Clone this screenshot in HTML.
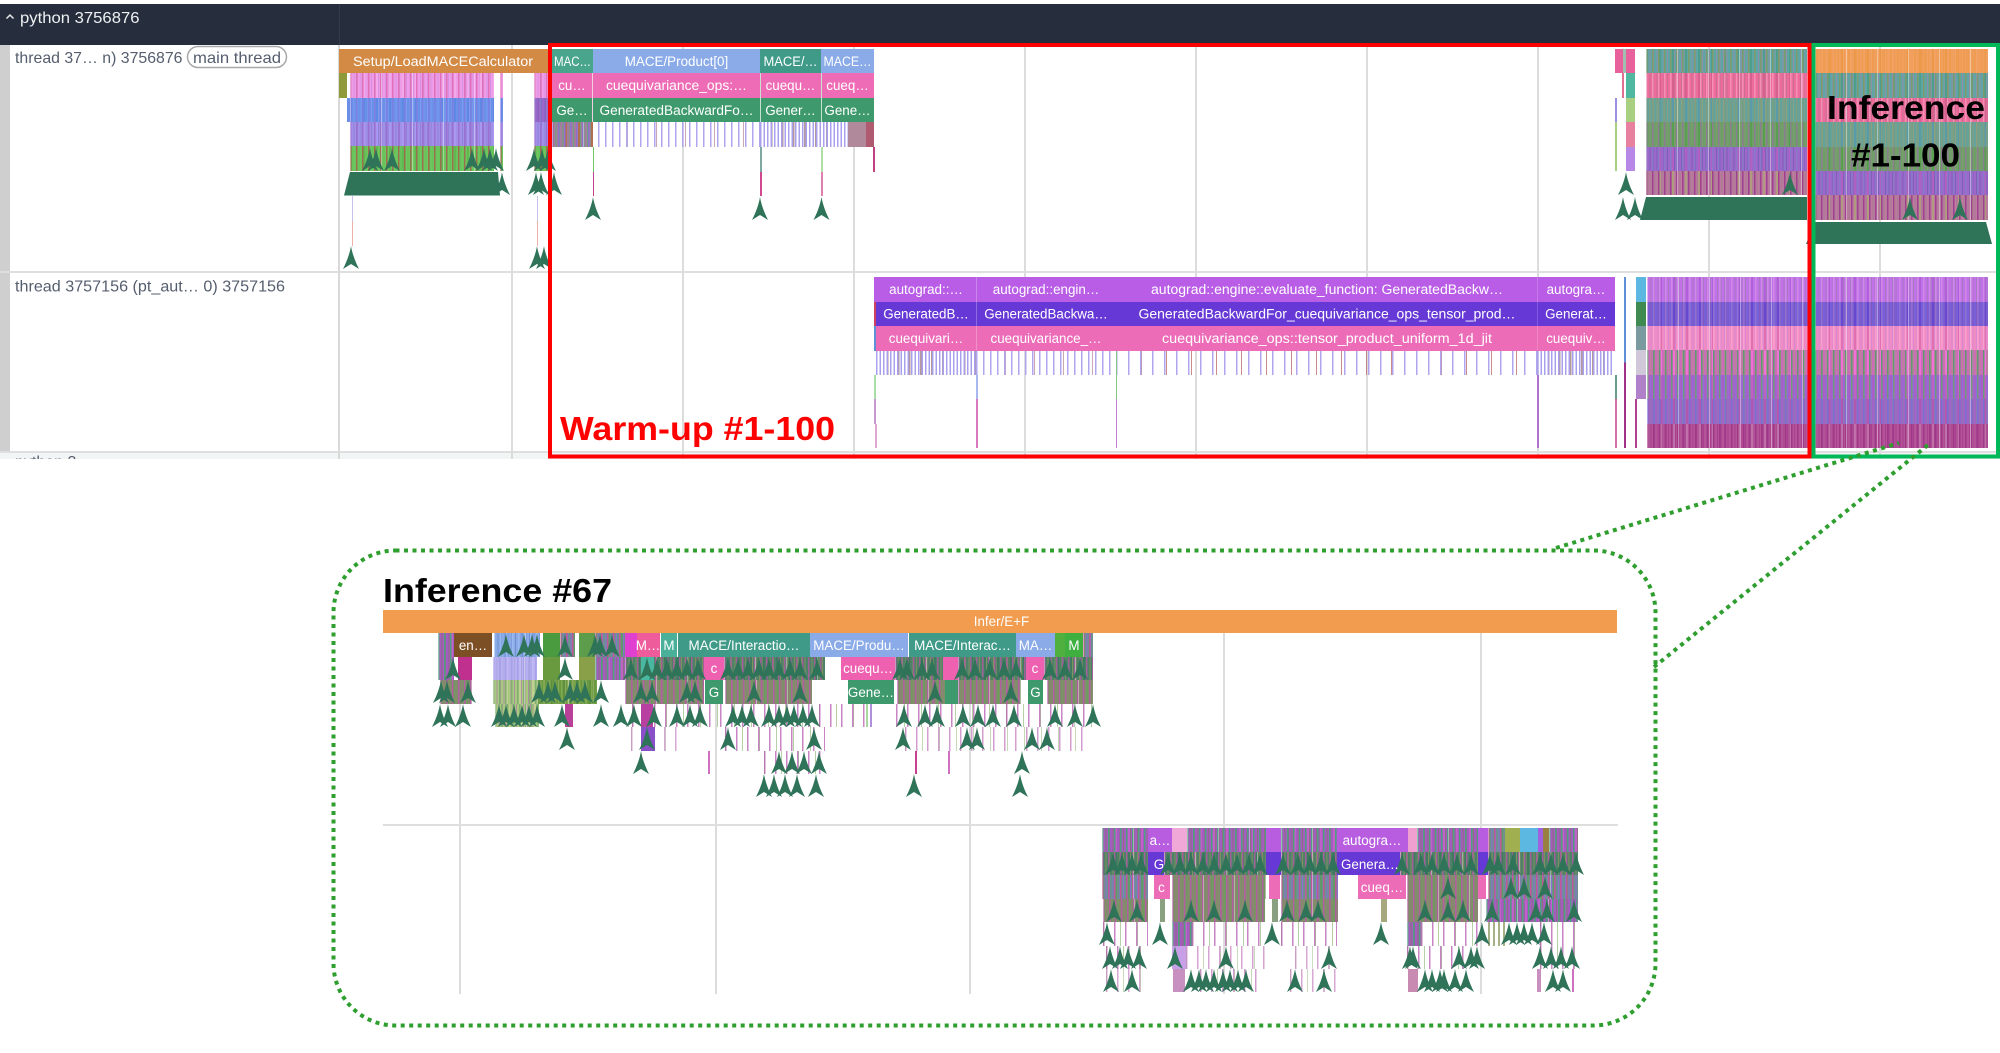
<!DOCTYPE html>
<html><head><meta charset="utf-8"><title>Trace</title>
<style>
html,body{margin:0;padding:0;background:#fff;width:2000px;height:1053px;overflow:hidden}
i{position:absolute;display:block}
.c{position:absolute}
.c b{display:block;height:24.4px}
.x,.c b{background:repeating-linear-gradient(90deg,rgba(255,255,255,.38) 0 1px,transparent 1px 31px),repeating-linear-gradient(90deg,var(--a) 0 1.5px,transparent 1.5px 6px),repeating-linear-gradient(90deg,var(--b) 0 2px,transparent 2px 13px),repeating-linear-gradient(90deg,var(--c) 0 1px,transparent 1px 3.5px),var(--d)}
.t1{--d:#5fa5a5;--a:#7f9a6a;--b:#4e9e8e;--c:#8f8fa8}
.p1{--d:#ee6c9c;--a:#f58fb5;--b:#d8608f;--c:#c87090}
.t2{--d:#64a29a;--a:#7d9e80;--b:#5b9aa8;--c:#8aa080}
.g1{--d:#6f9f68;--a:#8a7f90;--b:#58a050;--c:#7f9a70}
.u1{--d:#9d68cc;--a:#8a78c8;--b:#b060c0;--c:#7f60b8}
.b1{--d:#b07a98;--a:#a04090;--b:#b09a80;--c:#c07aa0}
.or{--d:#ef9c50;--a:#f0a060;--b:#eb9848;--c:#f2a468}
.a1{--d:#c272e8;--a:#d088e8;--b:#b060d8;--c:#a878c0}
.a2{--d:#7860d8;--a:#8f70d0;--b:#6848d0;--c:#8058c0}
.a3{--d:#f08cc4;--a:#f8a0d0;--b:#e070b0;--c:#d888d0}
.a4{--d:#cc6cb8;--a:#5f9a70;--b:#f070d8;--c:#b08a90}
.a5{--d:#a860c8;--a:#6f9a80;--b:#c060c0;--c:#8a70d8}
.a6{--d:#a264c4;--a:#7a70d0;--b:#b058b0;--c:#8a78b8}
.a7{--d:#b45498;--a:#a03888;--b:#c070a8;--c:#a84090}
.pk{--d:#ee9be8;--a:#e070b8;--b:#f4a8ec;--c:#d890e0}
.bl{--d:#6a90e8;--a:#7a80e0;--b:#5f88e4;--c:#7f9af0}
.pu{--d:#a290e8;--a:#9a70d0;--b:#a898f0;--c:#9080d8}
.gr{--d:#68c45a;--a:#9a7050;--b:#5fb850;--c:#70c860}
.wm{--d:#a27f9c;--a:#8f70d0;--b:#b07050;--c:#6fa080}
.k1{--d:#a45cc0;--a:#4fa080;--b:#c060c8;--c:#8a7080}
.k2{--d:#4f8068;--a:#a06098;--b:#3f7a60;--c:#7f8f60}
.k3{--d:#7f9068;--a:#b060a0;--b:#6f9a60;--c:#8f8078}
.k4{--d:#b8b0f0;--a:#a8a0e8;--b:#c0b8f4;--c:#a8a8e0}
.k5{--d:#a8c880;--a:#80b070;--b:#c0d090;--c:#b090a0}
.k6{--d:#6a9a40;--a:#7fa850;--b:#5f9040;--c:#8aa860}
.k7{--d:#8aabe8;--a:#98b8f0;--b:#80a0e0;--c:#6f90d0}
.k8{--d:#6f9090;--a:#c05898;--b:#5f9a68;--c:#8a70d0}
.sp{background:repeating-linear-gradient(90deg,rgba(176,80,170,.7) 0 1.5px,transparent 1.5px 11px),repeating-linear-gradient(90deg,rgba(120,170,90,.55) 0 1px,transparent 1px 17px)}
.sl{background:repeating-linear-gradient(90deg,#b0a6f0 0 1.5px,transparent 1.5px 7px),repeating-linear-gradient(90deg,rgba(170,110,130,.6) 0 1px,transparent 1px 29px)}
.dl{background:repeating-linear-gradient(90deg,#a8a0ee 0 1.5px,transparent 1.5px 3.5px),repeating-linear-gradient(90deg,rgba(150,110,110,.7) 0 1.5px,transparent 1.5px 11px)}
svg{position:absolute;left:0;top:0}
</style></head><body>

<i style="left:0;top:4px;width:2000px;height:40.5px;background:#262e3d"></i>
<i style="left:339px;top:4px;width:1px;height:40.5px;background:#333b4a"></i>
<i style="left:0;top:45px;width:10px;height:407px;background:#cfcfcf"></i>
<i style="left:0;top:452px;width:2000px;height:7px;background:#f2f5f6;overflow:hidden;font:16px 'Liberation Sans',sans-serif;color:#555e6e"><span style="position:absolute;left:15px;top:2px;line-height:18px">python 3</span></i>
<i style="left:0;top:271px;width:2000px;height:2px;background:#dfdfdf"></i>
<i style="left:0;top:451px;width:2000px;height:2px;background:#dfdfdf"></i>
<i style="left:338px;top:45px;width:2px;height:414px;background:#d9d9d9"></i>
<i style="left:511px;top:45px;width:1.5px;height:414px;background:#dcdcdc"></i>
<i style="left:682px;top:45px;width:1.5px;height:414px;background:#dcdcdc"></i>
<i style="left:853px;top:45px;width:1.5px;height:414px;background:#dcdcdc"></i>
<i style="left:1024px;top:45px;width:1.5px;height:414px;background:#dcdcdc"></i>
<i style="left:1195px;top:45px;width:1.5px;height:414px;background:#dcdcdc"></i>
<i style="left:1366px;top:45px;width:1.5px;height:414px;background:#dcdcdc"></i>
<i style="left:1537px;top:45px;width:1.5px;height:414px;background:#dcdcdc"></i>
<i style="left:1708px;top:45px;width:1.5px;height:414px;background:#dcdcdc"></i>
<i style="left:1879px;top:45px;width:1.5px;height:414px;background:#dcdcdc"></i>

<!-- Setup region -->
<i style="left:339px;top:49px;width:213px;height:24.4px;background:#d28a45"></i>
<i style="left:339px;top:73.3px;width:8px;height:24.4px;background:#8f9a3a"></i>
<i style="left:347px;top:98px;width:3px;height:24.4px;background:#6a90e8"></i>
<div class="c" style="left:350px;top:73.3px;width:144px"><b class="pk"></b><b class="bl"></b><b class="pu"></b><b class="gr"></b></div>
<div class="c" style="left:500px;top:73.3px;width:3px"><b class="pk"></b><b class="bl"></b><b class="pu"></b><b class="gr"></b></div>
<div class="c" style="left:534px;top:73.3px;width:18px"><b class="pk"></b><b class="u1"></b><b class="pu"></b><b class="gr"></b></div>
<i style="left:351.500px;top:196px;width:1.5px;height:25px;background:#c8c0ee"></i>
<i style="left:351.500px;top:221px;width:1.5px;height:25px;background:#eeb0a8"></i>
<i style="left:536.500px;top:196px;width:1.5px;height:25px;background:#c8c0ee"></i>
<i style="left:536.500px;top:221px;width:1.5px;height:25px;background:#eeb0a8"></i>

<!-- Warmup top -->
<i style="left:552px;top:49px;width:41px;height:24.4px;background:#4aa58d"></i>
<i style="left:593px;top:49px;width:167px;height:24.4px;background:#8aabe8"></i>
<i style="left:760px;top:49px;width:61px;height:24.4px;background:#3f9a88"></i>
<i style="left:821px;top:49px;width:53px;height:24.4px;background:#8aabe8"></i>
<i style="left:552px;top:73.4px;width:322px;height:24.4px;background:#ee6cb5"></i>
<i style="left:552px;top:98px;width:322px;height:24.4px;background:#3e9a6d"></i>
<i style="left:592px;top:73.4px;width:1px;height:49px;background:#f0d0e0"></i>
<i style="left:760px;top:73.4px;width:1px;height:49px;background:#c8e0d0"></i>
<i style="left:821px;top:73.4px;width:1px;height:49px;background:#c8e0d0"></i>
<i class="x wm" style="left:552px;top:122.400px;width:41px;height:24.400px"></i>
<i class="sl" style="left:598px;top:122.400px;width:162px;height:24.400px"></i>
<i class="dl" style="left:760px;top:122.400px;width:100px;height:24.400px"></i>
<i style="left:848px;top:122.400px;width:18px;height:24.400px;background:#b08a9a"></i>
<i style="left:866px;top:122.400px;width:8px;height:24.400px;background:#b05a70"></i>
<i style="left:592.500px;top:147px;width:1.5px;height:24.500px;background:#70c860"></i>
<i style="left:592.500px;top:171.500px;width:1.5px;height:24.500px;background:#c0408f"></i>
<i style="left:760px;top:147px;width:1.5px;height:24.500px;background:#7fa8a0"></i>
<i style="left:760px;top:171.500px;width:1.5px;height:24.500px;background:#d04890"></i>
<i style="left:821px;top:147px;width:1.5px;height:24.500px;background:#b0e0a8"></i>
<i style="left:821px;top:171.500px;width:1.5px;height:24.500px;background:#e080b0"></i>
<i style="left:873px;top:147px;width:1.5px;height:24.500px;background:#c04080"></i>

<!-- small blocks top right -->
<i style="left:1615px;top:49px;width:8px;height:24.400px;background:#e8609c"></i>
<i style="left:1626px;top:49px;width:9px;height:24.400px;background:#e8609c"></i>
<i style="left:1623px;top:49px;width:3px;height:24.400px;background:#9fc0b0"></i>
<i style="left:1626px;top:73.400px;width:9px;height:24.400px;background:#50b8a0"></i>
<i style="left:1622px;top:73.400px;width:2px;height:24.400px;background:#e07090"></i>
<i style="left:1626px;top:98px;width:9px;height:24.400px;background:#a8d080"></i>
<i style="left:1615px;top:98px;width:2px;height:24.400px;background:#9a90e0"></i>
<i style="left:1626px;top:122.400px;width:9px;height:24.400px;background:#e880a0"></i>
<i style="left:1615px;top:122.400px;width:1.5px;height:49px;background:#a8d080"></i>
<i style="left:1626px;top:147px;width:9px;height:24.400px;background:#b888e8"></i>

<!-- Warmup dense top -->
<div class="c" style="left:1646px;top:49px;width:161px"><b class="t1"></b><b class="p1"></b><b class="t2"></b><b class="g1"></b><b class="u1"></b><b class="b1"></b></div>
<!-- Inference 1-100 dense top -->
<div class="c" style="left:1815px;top:49px;width:173px"><b class="or"></b><b class="t1"></b><b class="p1"></b><b class="t2"></b><b class="g1"></b><b class="u1"></b><b class="b1"></b></div>

<!-- Thread 2 -->
<i style="left:874px;top:277.300px;width:741px;height:24.400px;background:#b95ce6"></i>
<i style="left:874px;top:301.700px;width:741px;height:24.400px;background:#6638d6"></i>
<i style="left:874px;top:326px;width:741px;height:24.500px;background:#ec6cb8"></i>
<i style="left:874px;top:277px;width:2px;height:24px;background:#b95ce6"></i>
<i style="left:874px;top:301.700px;width:2px;height:24.400px;background:#d04060"></i>
<i style="left:874px;top:326px;width:2px;height:24.500px;background:#6090d8"></i>
<i style="left:976px;top:277.300px;width:1px;height:73px;background:rgba(255,255,255,.25)"></i>
<i style="left:1537px;top:277.300px;width:1px;height:73px;background:rgba(255,255,255,.18)"></i>
<i class="dl" style="left:876px;top:350.700px;width:100px;height:24.400px"></i>
<i class="sl" style="left:976px;top:350.700px;width:140px;height:24.400px"></i>
<i style="left:1116px;top:350.700px;width:421px;height:24.400px;background:repeating-linear-gradient(90deg,#b0a6f0 0 1.5px,transparent 1.5px 12px),repeating-linear-gradient(90deg,rgba(180,90,90,.7) 0 1px,transparent 1px 25px)"></i>
<i class="dl" style="left:1537px;top:350.700px;width:76px;height:24.400px"></i>
<i style="left:874px;top:375px;width:2px;height:24.400px;background:#a8dca8"></i>
<i style="left:874px;top:399.300px;width:1.500px;height:24.700px;background:#c898d0"></i>
<i style="left:874.500px;top:424px;width:2px;height:24.300px;background:#e0a8d0"></i>
<i style="left:976px;top:375px;width:1.500px;height:24.400px;background:#a8b8f0"></i>
<i style="left:976px;top:399.300px;width:1.500px;height:49px;background:#d878c0"></i>
<i style="left:1115.500px;top:350.700px;width:1.500px;height:49px;background:#80c880"></i>
<i style="left:1115.500px;top:399.300px;width:1.500px;height:49px;background:#c080d8"></i>
<i style="left:1537px;top:375px;width:1.500px;height:73.300px;background:#b070d0"></i>
<i style="left:1615px;top:375px;width:1.500px;height:24.400px;background:#6a9a8a"></i>
<i style="left:1615px;top:399.300px;width:1.500px;height:49px;background:#d070b0"></i>
<i style="left:1624px;top:277.300px;width:2px;height:171px;background:linear-gradient(#6090d8 0 50%,#a03088 50%)"></i>
<i style="left:1635px;top:399.300px;width:2px;height:49px;background:#b04090"></i>
<div class="c" style="left:1636px;top:277.300px;width:10px">
<i style="position:static;height:24.400px;background:#5cb8e0"></i>
<i style="position:static;height:24.400px;background:#3e8a50"></i>
<i style="position:static;height:24.400px;background:#7a9aa0"></i>
<i style="position:static;height:24.400px;background:#d0c8d8"></i>
<i style="position:static;height:24.400px;background:#b080c8"></i>
</div>
<div class="c" style="left:1646.500px;top:277.300px;width:161px"><b class="a1"></b><b class="a2"></b><b class="a3"></b><b class="a4"></b><b class="a5"></b><b class="a6"></b><b class="a7"></b></div>
<div class="c" style="left:1815px;top:277.300px;width:173px"><b class="a1"></b><b class="a2"></b><b class="a3"></b><b class="a4"></b><b class="a5"></b><b class="a6"></b><b class="a7"></b></div>

<!-- Bottom panel: grid -->
<i style="left:459px;top:610px;width:1.500px;height:384px;background:#dcdcdc"></i>
<i style="left:715px;top:610px;width:1.500px;height:384px;background:#dcdcdc"></i>
<i style="left:969px;top:610px;width:1.500px;height:384px;background:#dcdcdc"></i>
<i style="left:1223px;top:610px;width:1.500px;height:384px;background:#dcdcdc"></i>
<i style="left:1480px;top:610px;width:1.500px;height:384px;background:#dcdcdc"></i>
<i style="left:383px;top:823.500px;width:1235px;height:2px;background:#dedede"></i>
<i style="left:383px;top:610px;width:1234px;height:23px;background:#f19c4e"></i>

<!-- Bottom row1 -->
<i class="x k1" style="left:438px;top:633px;width:16px;height:24px"></i>
<i style="left:454px;top:633px;width:38px;height:24px;background:#7d4f25"></i>
<i class="x k7" style="left:493.500px;top:633px;width:46px;height:24px"></i>
<i style="left:543px;top:633px;width:17px;height:24px;background:#4a9a40"></i>
<i class="x k8" style="left:560px;top:633px;width:15px;height:24px"></i>
<i style="left:579px;top:633px;width:16px;height:24px;background:#5c9c4a"></i>
<i class="x k8" style="left:595px;top:633px;width:30px;height:24px"></i>
<i style="left:625px;top:633px;width:12px;height:24px;background:#e040d0"></i>
<i style="left:637px;top:633px;width:23px;height:24px;background:#ee5c9c"></i>
<i style="left:661px;top:633px;width:16px;height:24px;background:#4ab09a"></i>
<i style="left:678px;top:633px;width:132px;height:24px;background:#3f9a88"></i>
<i style="left:810px;top:633px;width:98px;height:24px;background:#8aabe8"></i>
<i style="left:909px;top:633px;width:107px;height:24px;background:#3f9a88"></i>
<i style="left:1016px;top:633px;width:39px;height:24px;background:#8aabe8"></i>
<i style="left:1055px;top:633px;width:10px;height:24px;background:#4fb040"></i>
<i style="left:1065px;top:633px;width:18px;height:24px;background:#3fb040"></i>
<i class="x k8" style="left:1083px;top:633px;width:10px;height:24px"></i>
<!-- Bottom row2 -->
<i class="x k1" style="left:438px;top:657px;width:16px;height:23px"></i>
<i style="left:458px;top:657px;width:14px;height:23px;background:#c0308f"></i>
<i class="x k4" style="left:493px;top:657px;width:44px;height:23px"></i>
<i style="left:543px;top:657px;width:17px;height:23px;background:#6a9a40"></i>
<i style="left:579px;top:657px;width:16px;height:23px;background:#8aa048"></i>
<i class="x k1" style="left:595px;top:657px;width:30px;height:23px"></i>
<i class="x k2" style="left:625px;top:657px;width:79px;height:23px"></i>
<i style="left:641px;top:657px;width:13px;height:23px;background:#4ab8a0"></i>
<i style="left:704px;top:657px;width:20px;height:23px;background:#ee60b0"></i>
<i class="x k2" style="left:724px;top:657px;width:101px;height:23px"></i>
<i style="left:841px;top:657px;width:54px;height:23px;background:#ee60b0"></i>
<i class="x k2" style="left:895px;top:657px;width:48px;height:23px"></i>
<i style="left:943px;top:657px;width:15px;height:23px;background:#ee60b0"></i>
<i class="x k2" style="left:958px;top:657px;width:68px;height:23px"></i>
<i style="left:1026px;top:657px;width:18px;height:23px;background:#ee60b0"></i>
<i class="x k2" style="left:1044px;top:657px;width:49px;height:23px"></i>
<!-- Bottom row3 -->
<i class="x k3" style="left:440px;top:680px;width:32px;height:24px"></i>
<i class="x k5" style="left:493px;top:680px;width:44px;height:24px"></i>
<i class="x k6" style="left:537px;top:680px;width:60px;height:24px"></i>
<i class="x k3" style="left:625px;top:680px;width:79px;height:24px"></i>
<i style="left:705px;top:680px;width:18px;height:24px;background:#3e9a6d"></i>
<i class="x k3" style="left:725px;top:680px;width:87px;height:24px"></i>
<i style="left:848px;top:680px;width:46px;height:24px;background:#3e9a6d"></i>
<i class="x k3" style="left:897px;top:680px;width:48px;height:24px"></i>
<i style="left:945px;top:680px;width:13px;height:24px;background:#3e9a6d"></i>
<i class="x k3" style="left:958px;top:680px;width:63px;height:24px"></i>
<i style="left:1028px;top:680px;width:15px;height:24px;background:#3e9a6d"></i>
<i class="x k3" style="left:1047px;top:680px;width:46px;height:24px"></i>
<!-- Bottom row4 -->
<i class="sp" style="left:632px;top:704px;width:460px;height:23px"></i>
<i class="x k5" style="left:495px;top:704px;width:44px;height:23px"></i>
<i style="left:641px;top:704px;width:12px;height:23px;background:#b840a0"></i>
<i style="left:565px;top:704px;width:8px;height:23px;background:#b84098"></i>
<i style="left:866px;top:704px;width:30px;height:23px;background:#fff"></i>
<i style="left:866px;top:704px;width:1.500px;height:23px;background:#a8d8a0"></i>
<i style="left:870px;top:704px;width:1.500px;height:23px;background:#b090d8"></i>
<!-- Bottom row5/6 -->
<i class="sp" style="left:631px;top:727px;width:50px;height:23.500px;opacity:.7"></i>
<i class="sp" style="left:725px;top:727px;width:100px;height:23.500px"></i>
<i class="sp" style="left:905px;top:727px;width:180px;height:23.500px;opacity:.8"></i>
<i style="left:641px;top:727px;width:14px;height:23.500px;background:#8a50c8"></i>
<i class="sp" style="left:764px;top:751px;width:60px;height:23px"></i>
<i style="left:708px;top:751px;width:1.500px;height:23px;background:#d070c0"></i>
<i style="left:915px;top:751px;width:1.500px;height:23px;background:#c84090"></i>
<i style="left:948px;top:751px;width:1.500px;height:23px;background:#d070c0"></i>

<!-- Bottom thread 2 -->
<i class="x k1" style="left:1102px;top:828.300px;width:46px;height:23.700px"></i>
<i style="left:1148px;top:828.300px;width:24px;height:23.700px;background:#b85ce0"></i>
<i style="left:1172px;top:828.300px;width:15px;height:23.700px;background:#f0a8d8"></i>
<i class="x k1" style="left:1187px;top:828.300px;width:79px;height:23.700px"></i>
<i style="left:1266px;top:828.300px;width:15px;height:23.700px;background:#b85ce0"></i>
<i class="x k1" style="left:1281px;top:828.300px;width:56px;height:23.700px"></i>
<i style="left:1337px;top:828.300px;width:70.600px;height:23.700px;background:#b85ce0"></i>
<i style="left:1407.600px;top:828.300px;width:9.400px;height:23.700px;background:#f0a0d0"></i>
<i class="x k1" style="left:1417px;top:828.300px;width:61px;height:23.700px"></i>
<i style="left:1478px;top:828.300px;width:10px;height:23.700px;background:#b85ce0"></i>
<i class="x k8" style="left:1488px;top:828.300px;width:17px;height:23.700px"></i>
<i style="left:1505px;top:828.300px;width:15px;height:23.700px;background:#a0b050"></i>
<i style="left:1520px;top:828.300px;width:18px;height:23.700px;background:#5cb8e0"></i>
<i style="left:1538px;top:828.300px;width:5px;height:23.700px;background:#a060e0"></i>
<i style="left:1543px;top:828.300px;width:6px;height:23.700px;background:#9a8040"></i>
<i class="x k1" style="left:1549px;top:828.300px;width:29px;height:23.700px"></i>

<i class="x k2" style="left:1102px;top:852px;width:46px;height:23px"></i>
<i style="left:1148px;top:852px;width:16px;height:23px;background:#6638d6"></i>
<i class="x k2" style="left:1164px;top:852px;width:102px;height:23px"></i>
<i style="left:1266px;top:852px;width:15px;height:23px;background:#6638d6"></i>
<i class="x k2" style="left:1281px;top:852px;width:56px;height:23px"></i>
<i style="left:1337px;top:852px;width:63px;height:23px;background:#6638d6"></i>
<i class="x k2" style="left:1400px;top:852px;width:78px;height:23px"></i>
<i style="left:1478px;top:852px;width:10px;height:23px;background:#6638d6"></i>
<i class="x k2" style="left:1488px;top:852px;width:90px;height:23px"></i>

<i class="x k8" style="left:1102px;top:875px;width:46px;height:24px"></i>
<i style="left:1153.500px;top:875px;width:16.500px;height:24px;background:#ec6cb8"></i>
<i class="x k3" style="left:1172px;top:875px;width:94px;height:24px"></i>
<i style="left:1269px;top:875px;width:11px;height:24px;background:#ec6cb8"></i>
<i class="x k8" style="left:1281px;top:875px;width:57px;height:24px"></i>
<i style="left:1358px;top:875px;width:48px;height:24px;background:#ec6cb8"></i>
<i class="x k3" style="left:1407px;top:875px;width:71px;height:24px"></i>
<i style="left:1478px;top:875px;width:8px;height:24px;background:#ec6cb8"></i>
<i class="x k8" style="left:1488px;top:875px;width:90px;height:24px"></i>

<i class="x k3" style="left:1103px;top:899px;width:45px;height:23px"></i>
<i style="left:1160px;top:899px;width:5px;height:23px;background:#8aa080"></i>
<i class="x k3" style="left:1172px;top:899px;width:93px;height:23px"></i>
<i style="left:1272px;top:899px;width:6px;height:23px;background:#8aa080"></i>
<i class="x k3" style="left:1281px;top:899px;width:57px;height:23px"></i>
<i style="left:1381px;top:899px;width:6px;height:23px;background:#a8a880"></i>
<i class="x k3" style="left:1407px;top:899px;width:71px;height:23px"></i>
<i class="x k1" style="left:1486px;top:899px;width:92px;height:23px"></i>

<i class="sp" style="left:1103px;top:922px;width:45px;height:24px"></i>
<i class="x k1" style="left:1172px;top:922px;width:20px;height:24px"></i>
<i class="sp" style="left:1192px;top:922px;width:74px;height:24px"></i>
<i class="sp" style="left:1281px;top:922px;width:56px;height:24px"></i>
<i class="x k1" style="left:1407px;top:922px;width:14px;height:24px"></i>
<i class="sp" style="left:1421px;top:922px;width:57px;height:24px"></i>
<i style="left:1488px;top:922px;width:20px;height:24px;background:repeating-linear-gradient(90deg,#a8b088 0 2px,transparent 2px 5px)"></i>
<i class="sp" style="left:1540px;top:922px;width:38px;height:24px"></i>

<i class="sp" style="left:1106px;top:946px;width:36px;height:23px"></i>
<i style="left:1172px;top:946px;width:14px;height:23px;background:#c8a0e8"></i>
<i class="sp" style="left:1186px;top:946px;width:80px;height:23px;opacity:.75"></i>
<i class="sp" style="left:1295px;top:946px;width:40px;height:23px;opacity:.7"></i>
<i class="sp" style="left:1407px;top:946px;width:60px;height:23px"></i>
<i class="sp" style="left:1540px;top:946px;width:38px;height:23px"></i>

<i style="left:1173px;top:969px;width:12px;height:23px;background:#c890c0"></i>
<i class="sp" style="left:1106px;top:969px;width:36px;height:23px;opacity:.7"></i>
<i class="sp" style="left:1200px;top:969px;width:65px;height:23px;opacity:.8"></i>
<i class="sp" style="left:1290px;top:969px;width:48px;height:23px;opacity:.7"></i>
<i style="left:1408px;top:969px;width:10px;height:23px;background:#c88ab0"></i>
<i style="left:1537px;top:969px;width:4px;height:23px;background:#c890c0"></i>
<i style="left:1572px;top:969px;width:1.500px;height:23px;background:#d070c0"></i>

<svg width="2000" height="1053" viewBox="0 0 2000 1053" xmlns="http://www.w3.org/2000/svg">
<defs><path id="a" d="M0 0C1.500 9 5 17 8 23L0 18-8 23C-5 17-1.500 9 0 0Z" fill="#2f7359"/></defs>

<!-- top left chevrons -->
<polygon points="350,172 498,172 500,195.500 344,195.500" fill="#2f7359"/>
<polygon points="1646,197 1807,197 1807,220 1640,220" fill="#2f7359"/>
<polygon points="1815,222 1986,222 1992,244 1806,244" fill="#2f7359"/>
<g fill="#2f7359">
<use href="#a" x="370" y="148"/><use href="#a" x="376" y="148"/><use href="#a" x="392" y="148"/><use href="#a" x="472" y="148"/><use href="#a" x="484" y="148"/><use href="#a" x="490" y="148"/><use href="#a" x="496" y="148"/>
<use href="#a" x="534" y="148"/><use href="#a" x="542" y="148"/><use href="#a" x="548" y="148"/>
<use href="#a" x="502" y="172"/><use href="#a" x="536" y="172"/><use href="#a" x="541" y="172"/><use href="#a" x="554" y="172"/>
<use href="#a" x="351" y="246"/><use href="#a" x="537" y="246"/><use href="#a" x="544" y="246"/>
<use href="#a" x="593" y="197"/><use href="#a" x="760" y="197"/><use href="#a" x="821.500" y="197"/>
<use href="#a" x="1626" y="172"/><use href="#a" x="1623" y="197"/><use href="#a" x="1635" y="197"/>
<use href="#a" x="1790" y="172"/><use href="#a" x="1910" y="197"/><use href="#a" x="1960" y="197"/>

<!-- bottom row 1 -->
<use href="#a" x="506" y="634"/><use href="#a" x="524" y="634"/><use href="#a" x="532" y="634"/><use href="#a" x="537" y="634"/><use href="#a" x="565" y="634"/><use href="#a" x="595" y="634"/><use href="#a" x="600" y="634"/><use href="#a" x="612" y="634"/>
<!-- bottom row 2 -->
<use href="#a" x="453" y="657"/><use href="#a" x="565" y="657"/><use href="#a" x="631" y="657"/><use href="#a" x="647" y="657"/><use href="#a" x="657" y="657"/><use href="#a" x="667" y="657"/><use href="#a" x="677" y="657"/><use href="#a" x="687" y="657"/><use href="#a" x="698" y="657"/><use href="#a" x="728" y="657"/><use href="#a" x="738" y="657"/><use href="#a" x="748" y="657"/><use href="#a" x="759" y="657"/><use href="#a" x="769" y="657"/><use href="#a" x="779" y="657"/><use href="#a" x="790" y="657"/><use href="#a" x="800" y="657"/><use href="#a" x="817" y="657"/><use href="#a" x="900" y="657"/><use href="#a" x="907" y="657"/><use href="#a" x="922" y="657"/><use href="#a" x="932" y="657"/><use href="#a" x="962" y="657"/><use href="#a" x="975" y="657"/><use href="#a" x="990" y="657"/><use href="#a" x="1004" y="657"/><use href="#a" x="1016" y="657"/><use href="#a" x="1050" y="657"/><use href="#a" x="1065" y="657"/><use href="#a" x="1080" y="657"/>
<!-- bottom row 3 -->
<use href="#a" x="441" y="680"/><use href="#a" x="447" y="680"/><use href="#a" x="468" y="680"/><use href="#a" x="539" y="680"/><use href="#a" x="548" y="680"/><use href="#a" x="555" y="680"/><use href="#a" x="570" y="680"/><use href="#a" x="577" y="680"/><use href="#a" x="585" y="680"/><use href="#a" x="601" y="680"/><use href="#a" x="641" y="680"/><use href="#a" x="652" y="680"/><use href="#a" x="687" y="680"/><use href="#a" x="695" y="680"/><use href="#a" x="754" y="680"/><use href="#a" x="800" y="680"/><use href="#a" x="935" y="680"/><use href="#a" x="1011" y="680"/>
<!-- bottom row 4 -->
<use href="#a" x="440" y="704"/><use href="#a" x="448" y="704"/><use href="#a" x="463" y="704"/><use href="#a" x="499" y="704"/><use href="#a" x="506" y="704"/><use href="#a" x="514" y="704"/><use href="#a" x="522" y="704"/><use href="#a" x="529" y="704"/><use href="#a" x="537" y="704"/><use href="#a" x="562" y="704"/><use href="#a" x="601" y="704"/><use href="#a" x="621" y="704"/><use href="#a" x="634" y="704"/><use href="#a" x="654" y="704"/><use href="#a" x="677" y="704"/><use href="#a" x="690" y="704"/><use href="#a" x="700" y="704"/><use href="#a" x="733" y="704"/><use href="#a" x="742" y="704"/><use href="#a" x="751" y="704"/><use href="#a" x="769" y="704"/><use href="#a" x="779" y="704"/><use href="#a" x="787" y="704"/><use href="#a" x="794" y="704"/><use href="#a" x="803" y="704"/><use href="#a" x="812" y="704"/><use href="#a" x="904" y="704"/><use href="#a" x="925" y="704"/><use href="#a" x="937" y="704"/><use href="#a" x="963" y="704"/><use href="#a" x="978" y="704"/><use href="#a" x="993" y="704"/><use href="#a" x="1014" y="704"/><use href="#a" x="1055" y="704"/><use href="#a" x="1075" y="704"/><use href="#a" x="1093" y="704"/>
<!-- bottom row 5-7 -->
<use href="#a" x="567" y="727"/><use href="#a" x="647" y="727"/><use href="#a" x="728" y="727"/><use href="#a" x="814" y="727"/><use href="#a" x="903" y="727"/><use href="#a" x="967" y="727"/><use href="#a" x="977" y="727"/><use href="#a" x="1032" y="727"/><use href="#a" x="1047" y="727"/>
<use href="#a" x="641" y="751"/><use href="#a" x="779" y="751"/><use href="#a" x="792" y="751"/><use href="#a" x="804" y="751"/><use href="#a" x="819" y="751"/><use href="#a" x="1022" y="751"/>
<use href="#a" x="764" y="774"/><use href="#a" x="774" y="774"/><use href="#a" x="785" y="774"/><use href="#a" x="797" y="774"/><use href="#a" x="816" y="774"/><use href="#a" x="914" y="774"/><use href="#a" x="1020" y="774"/>

<!-- bottom thread 2 row 2 -->
<use href="#a" x="1113" y="852"/><use href="#a" x="1122" y="852"/><use href="#a" x="1132" y="852"/><use href="#a" x="1141" y="852"/><use href="#a" x="1168" y="852"/><use href="#a" x="1180" y="852"/><use href="#a" x="1191" y="852"/><use href="#a" x="1203" y="852"/><use href="#a" x="1214" y="852"/><use href="#a" x="1226" y="852"/><use href="#a" x="1237" y="852"/><use href="#a" x="1249" y="852"/><use href="#a" x="1260" y="852"/><use href="#a" x="1283" y="852"/><use href="#a" x="1298" y="852"/><use href="#a" x="1310" y="852"/><use href="#a" x="1321" y="852"/><use href="#a" x="1333" y="852"/><use href="#a" x="1402" y="852"/><use href="#a" x="1421" y="852"/><use href="#a" x="1432" y="852"/><use href="#a" x="1444" y="852"/><use href="#a" x="1457" y="852"/><use href="#a" x="1471" y="852"/><use href="#a" x="1490" y="852"/><use href="#a" x="1498" y="852"/><use href="#a" x="1513" y="852"/><use href="#a" x="1540" y="852"/><use href="#a" x="1551" y="852"/><use href="#a" x="1563" y="852"/><use href="#a" x="1576" y="852"/>
<use href="#a" x="1448" y="876"/><use href="#a" x="1511" y="876"/><use href="#a" x="1524" y="876"/><use href="#a" x="1545" y="876"/>
<use href="#a" x="1114" y="899"/><use href="#a" x="1137" y="899"/><use href="#a" x="1191" y="899"/><use href="#a" x="1214" y="899"/><use href="#a" x="1245" y="899"/><use href="#a" x="1287" y="899"/><use href="#a" x="1306" y="899"/><use href="#a" x="1318" y="899"/><use href="#a" x="1425" y="899"/><use href="#a" x="1448" y="899"/><use href="#a" x="1463" y="899"/><use href="#a" x="1492" y="899"/><use href="#a" x="1536" y="899"/><use href="#a" x="1547" y="899"/><use href="#a" x="1574" y="899"/>
<use href="#a" x="1107" y="922"/><use href="#a" x="1160" y="922"/><use href="#a" x="1272" y="922"/><use href="#a" x="1381" y="922"/><use href="#a" x="1482" y="922"/><use href="#a" x="1509" y="922"/><use href="#a" x="1517" y="922"/><use href="#a" x="1524" y="922"/><use href="#a" x="1532" y="922"/><use href="#a" x="1544" y="922"/>
<use href="#a" x="1110" y="946"/><use href="#a" x="1120" y="946"/><use href="#a" x="1128" y="946"/><use href="#a" x="1139" y="946"/><use href="#a" x="1175" y="946"/><use href="#a" x="1226" y="946"/><use href="#a" x="1329" y="946"/><use href="#a" x="1410" y="946"/><use href="#a" x="1413" y="946"/><use href="#a" x="1459" y="946"/><use href="#a" x="1471" y="946"/><use href="#a" x="1477" y="946"/><use href="#a" x="1540" y="946"/><use href="#a" x="1551" y="946"/><use href="#a" x="1561" y="946"/><use href="#a" x="1572" y="946"/>
<use href="#a" x="1111" y="969"/><use href="#a" x="1132" y="969"/><use href="#a" x="1191" y="969"/><use href="#a" x="1199" y="969"/><use href="#a" x="1206" y="969"/><use href="#a" x="1214" y="969"/><use href="#a" x="1223" y="969"/><use href="#a" x="1230" y="969"/><use href="#a" x="1238" y="969"/><use href="#a" x="1246" y="969"/><use href="#a" x="1295" y="969"/><use href="#a" x="1324" y="969"/><use href="#a" x="1425" y="969"/><use href="#a" x="1432" y="969"/><use href="#a" x="1440" y="969"/><use href="#a" x="1444" y="969"/><use href="#a" x="1455" y="969"/><use href="#a" x="1466" y="969"/><use href="#a" x="1553" y="969"/><use href="#a" x="1563" y="969"/>
</g>

<!-- header / thread labels -->
<polyline points="6.500,18.500 10,15 13.500,18.500" fill="none" stroke="#e8e8e8" stroke-width="1.500"/>
<g font-family="'Liberation Sans',sans-serif" font-size="16">
<text x="20" y="23" fill="#eef0f2" textLength="119.500" lengthAdjust="spacingAndGlyphs">python 3756876</text>
<text x="15" y="63" fill="#555e6e" textLength="167.500" lengthAdjust="spacingAndGlyphs">thread 37… n) 3756876</text>
<rect x="187.500" y="46.500" width="99" height="21" rx="10.500" fill="#fff" stroke="#a8a8a8" stroke-width="1.500"/>
<text x="193" y="63" fill="#555e6e" textLength="88" lengthAdjust="spacingAndGlyphs">main thread</text>
<text x="15" y="291.500" fill="#555e6e" textLength="270" lengthAdjust="spacingAndGlyphs">thread 3757156 (pt_aut… 0) 3757156</text>
</g>

<!-- slice labels -->
<g font-family="'Liberation Sans',sans-serif" font-size="13.400" fill="#fff" text-anchor="middle">
<text x="443" y="66" text-anchor="middle" textLength="180" lengthAdjust="spacingAndGlyphs">Setup/LoadMACECalculator</text>
<text x="572.500" y="66" textLength="37" lengthAdjust="spacingAndGlyphs">MAC…</text>
<text x="676.500" y="66">MACE/Product[0]</text>
<text x="790.500" y="66" textLength="54" lengthAdjust="spacingAndGlyphs">MACE/…</text>
<text x="847.500" y="66" textLength="48" lengthAdjust="spacingAndGlyphs">MACE…</text>
<text x="572" y="90">cu…</text>
<text x="676.500" y="90" textLength="141" lengthAdjust="spacingAndGlyphs">cuequivariance_ops:…</text>
<text x="790.500" y="90">cuequ…</text>
<text x="847.500" y="90">cueq…</text>
<text x="572" y="115">Ge…</text>
<text x="676.500" y="115" textLength="154" lengthAdjust="spacingAndGlyphs">GeneratedBackwardFo…</text>
<text x="790.500" y="115">Gener…</text>
<text x="847.500" y="115">Gene…</text>

<text x="926" y="294">autograd::…</text>
<text x="1046" y="294">autograd::engin…</text>
<text x="1327" y="294" textLength="352" lengthAdjust="spacingAndGlyphs">autograd::engine::evaluate_function: GeneratedBackw…</text>
<text x="1576" y="294">autogra…</text>
<text x="926" y="318.500">GeneratedB…</text>
<text x="1046" y="318.500">GeneratedBackwa…</text>
<text x="1327" y="318.500" textLength="377" lengthAdjust="spacingAndGlyphs">GeneratedBackwardFor_cuequivariance_ops_tensor_prod…</text>
<text x="1576" y="318.500">Generat…</text>
<text x="926" y="343">cuequivari…</text>
<text x="1046" y="343">cuequivariance_…</text>
<text x="1327" y="343" textLength="330" lengthAdjust="spacingAndGlyphs">cuequivariance_ops::tensor_product_uniform_1d_jit</text>
<text x="1576" y="343">cuequiv…</text>

<text x="1001.500" y="626">Infer/E+F</text>
<text x="473" y="650">en…</text>
<text x="648" y="650">M…</text>
<text x="669" y="650">M</text>
<text x="744" y="650">MACE/Interactio…</text>
<text x="859" y="650">MACE/Produ…</text>
<text x="962.500" y="650">MACE/Interac…</text>
<text x="1035.500" y="650">MA…</text>
<text x="1074" y="650">M</text>
<text x="714" y="673">c</text>
<text x="868" y="673">cuequ…</text>
<text x="1035" y="673">c</text>
<text x="714" y="697">G</text>
<text x="871" y="697">Gene…</text>
<text x="1035.500" y="697">G</text>

<text x="1160" y="845">a…</text>
<text x="1372" y="845">autogra…</text>
<text x="1159" y="869">G</text>
<text x="1370" y="869">Genera…</text>
<text x="1161.500" y="892">c</text>
<text x="1382" y="892">cueq…</text>
</g>

<!-- Boxes and annotations -->
<rect x="550" y="45" width="1259.500" height="411.500" fill="none" stroke="#ff0000" stroke-width="4"/>
<rect x="1813.500" y="45" width="184.500" height="411.500" fill="none" stroke="#00b857" stroke-width="4"/>
<g font-family="'Liberation Sans',sans-serif" font-weight="700">
<text x="560" y="440" font-size="33" fill="#ff0000" textLength="275" lengthAdjust="spacingAndGlyphs">Warm-up #1-100</text>
<text x="1827" y="119" font-size="33" fill="#000" textLength="158" lengthAdjust="spacingAndGlyphs">Inference</text>
<text x="1851" y="166.500" font-size="33" fill="#000" textLength="109" lengthAdjust="spacingAndGlyphs">#1-100</text>
<text x="383" y="602" font-size="33.500" fill="#000" textLength="229" lengthAdjust="spacingAndGlyphs">Inference #67</text>
</g>
<rect x="333.500" y="550.500" width="1322" height="475" rx="62" ry="62" fill="none" stroke="#2e9e2e" stroke-width="4" stroke-dasharray="4 4.500"/>
<line x1="1556" y1="548" x2="1899" y2="443" stroke="#2e9e2e" stroke-width="4" stroke-dasharray="4 4.500"/>
<line x1="1654" y1="667" x2="1928" y2="445" stroke="#2e9e2e" stroke-width="4" stroke-dasharray="4 4.500"/>
</svg>
</body></html>
